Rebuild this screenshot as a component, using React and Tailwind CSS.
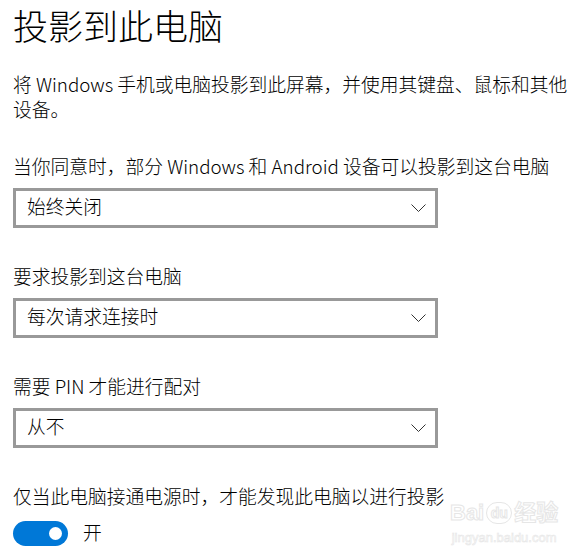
import React from "react";

function Chevron() {
  return (
    <svg width="15" height="8" viewBox="0 0 15 8" fill="none">
      <path d="M0.5 0.5 L7.5 7.5 L14.5 0.5" stroke="#333" strokeWidth="1" />
    </svg>
  );
}

function Dropdown({ value }) {
  return (
    <div className="mt-[10px] w-[425px] h-[40px] border-[3px] border-[#999999] bg-white flex items-center justify-between pl-[11px] pr-[9px]">
      <span className="pb-[5px] text-[18.75px] leading-[25px] text-black">{value}</span>
      <Chevron />
    </div>
  );
}

function Label({ children, className = "" }) {
  return (
    <div className={"text-[18.75px] leading-[25px] text-black whitespace-nowrap " + className}>
      {children}
    </div>
  );
}

export default function App() {
  return (
    <div
      className="relative w-[586px] h-[559px] overflow-hidden bg-white pl-[13px] text-black font-light"
      style={{ fontFamily: '"Noto Sans CJK SC", "Noto Sans", sans-serif' }}
    >
      <h1 className="text-[35px] leading-[50px] font-light whitespace-nowrap">投影到此电脑</h1>

      <div className="mt-[21px] text-[18.75px] leading-[25px] whitespace-nowrap">
        将 Windows 手机或电脑投影到此屏幕，并使用其键盘、鼠标和其他
        <br />
        设备。
      </div>

      <Label className="mt-[32px]">当你同意时，部分 Windows 和 Android 设备可以投影到这台电脑</Label>
      <Dropdown value="始终关闭" />

      <Label className="mt-[35px]">要求投影到这台电脑</Label>
      <Dropdown value="每次请求连接时" />

      <Label className="mt-[35px]">需要 PIN 才能进行配对</Label>
      <Dropdown value="从不" />

      <Label className="mt-[35px]">仅当此电脑接通电源时，才能发现此电脑以进行投影</Label>
      <div className="mt-[11px] flex items-center">
        <div className="w-[55px] h-[25px] rounded-full bg-[#0078d7] flex items-center justify-end pr-[6px]">
          <div className="w-[13px] h-[13px] rounded-full bg-white" />
        </div>
        <span className="ml-[15px] pb-[3px] text-[18.75px] leading-[25px]">开</span>
      </div>

      <div className="absolute left-[450px] top-[500px] flex flex-col items-center select-none pointer-events-none">
        <div className="flex items-center text-[22px] leading-[26px] font-bold text-white [-webkit-text-stroke:1px_#e6e6e6]" style={{ fontFamily: '"Liberation Sans", "Noto Sans CJK SC", sans-serif' }}>
          <span>Bai</span>
          <span className="mx-[2px] w-[26px] h-[22px] rounded-full border border-[#e6e6e6] text-[14px] leading-[20px] text-center">du</span>
          <span>经验</span>
        </div>
        <div className="mt-[4px] text-[13px] leading-[15px] text-white [-webkit-text-stroke:0.6px_#e6e6e6]" style={{ fontFamily: '"Liberation Sans", sans-serif' }}>
          jingyan.baidu.com
        </div>
      </div>
    </div>
  );
}
